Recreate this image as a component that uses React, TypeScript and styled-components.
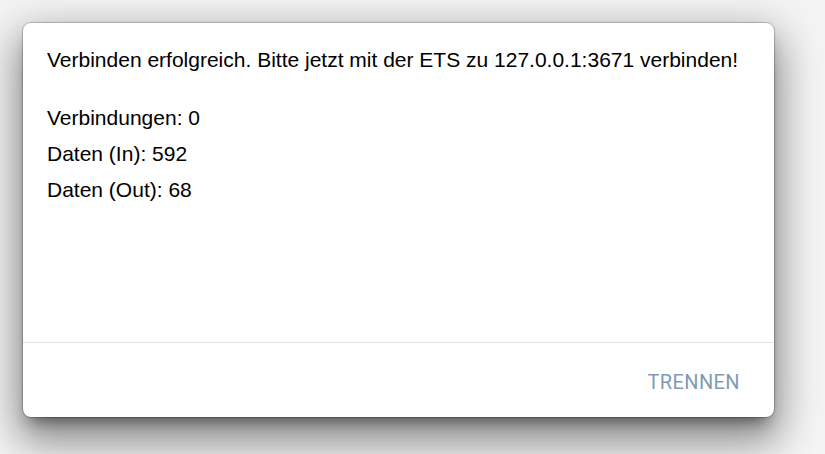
import React from "react";
import styled, { createGlobalStyle } from "styled-components";

const Global = createGlobalStyle`
  html, body { margin: 0; padding: 0; background: #f3f3f3; }
  body { width: 825px; height: 454px; overflow: hidden; }
`;

const Page = styled.div`
  width: 825px;
  height: 454px;
  box-sizing: border-box;
  padding: 23px 51px 37px 23px;
  display: flex;
  background: #f4f4f4;
`;

const Dialog = styled.div`
  flex: 1;
  display: flex;
  flex-direction: column;
  background: #ffffff;
  border-radius: 8px;
  box-shadow: 0 0 1px 1px rgba(0, 0, 0, 0.22), 0 11px 15px -7px rgba(0, 0, 0, 0.45),
    0 24px 38px 3px rgba(0, 0, 0, 0.3), 0 9px 46px 8px rgba(0, 0, 0, 0.18);
  overflow: hidden;
`;

const Content = styled.div`
  flex: 1;
  padding: 25px 24px 0 24px;
  font-family: "Liberation Sans", Arial, sans-serif;
  font-size: 21px;
  color: #000000;
  border-bottom: 1px solid #e3e3e3;
`;

const Headline = styled.p`
  margin: 0 0 28px 0;
  line-height: 24px;
`;

const StatLine = styled.p`
  margin: 0;
  line-height: 36px;
`;

const Footer = styled.div`
  height: 74px;
  display: flex;
  align-items: center;
  justify-content: flex-end;
  padding: 0 26px 0 0;
`;

const TextButton = styled.button`
  background: none;
  border: none;
  padding: 6px 8px;
  font-family: Roboto, "Liberation Sans", sans-serif;
  font-size: 20px;
  letter-spacing: 0.4px;
  text-transform: uppercase;
  color: #7f9bb5;
  cursor: pointer;
  margin-top: 4px;
`;

const stats = [
  { label: "Verbindungen", value: 0 },
  { label: "Daten (In)", value: 592 },
  { label: "Daten (Out)", value: 68 },
];

export default function App() {
  return (
    <>
      <Global />
      <Page>
        <Dialog>
          <Content>
            <Headline>
              Verbinden erfolgreich. Bitte jetzt mit der ETS zu 127.0.0.1:3671 verbinden!
            </Headline>
            {stats.map((s) => (
              <StatLine key={s.label}>
                {s.label}: {s.value}
              </StatLine>
            ))}
          </Content>
          <Footer>
            <TextButton>Trennen</TextButton>
          </Footer>
        </Dialog>
      </Page>
    </>
  );
}
